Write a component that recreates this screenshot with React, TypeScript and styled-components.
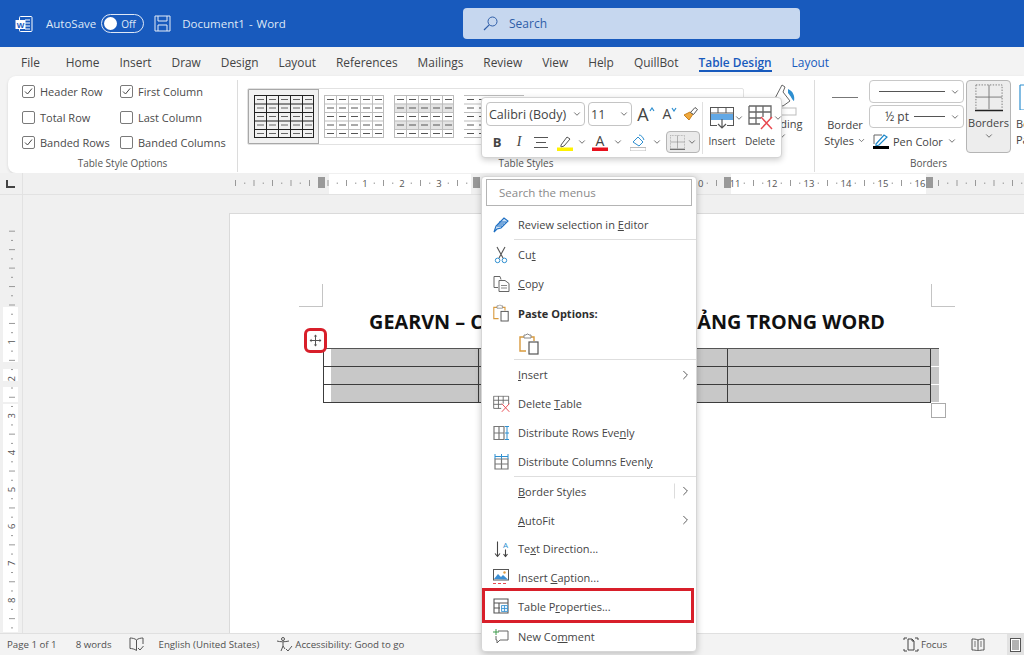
import React from "react";
import styled, { createGlobalStyle } from "styled-components";
import { ChevronDown, ChevronRight } from "lucide-react";

const UI_FONT = `"Open Sans", "Noto Sans", "Liberation Sans", sans-serif`;

const GlobalStyle = createGlobalStyle`
  html, body {
    margin: 0;
    padding: 0;
    background: #f0f0f0;
  }
  * {
    box-sizing: border-box;
  }
`;

const Window = styled.div`
  position: relative;
  width: 1024px;
  height: 655px;
  overflow: hidden;
  display: flex;
  flex-direction: column;
  background: #f3f3f3;
  font-family: ${UI_FONT};
  font-size: 11px;
  color: #404040;
`;

/* title bar */
const TitleBar = styled.header`
  height: 47px;
  flex: none;
  background: #185abd;
  display: flex;
  align-items: center;
  padding-left: 15px;
  color: #dfe8f6;
`;

const AutoSave = styled.span`
  margin-left: 13px;
  font-size: 11.5px;
`;

const Toggle = styled.span`
  margin-left: 5px;
  width: 43px;
  height: 19px;
  border: 1px solid #dfe8f6;
  border-radius: 10px;
  display: flex;
  align-items: center;
  gap: 4px;
  padding-left: 2px;
  font-size: 10px;
`;

const Knob = styled.span`
  width: 13px;
  height: 13px;
  border-radius: 50%;
  background: #fff;
`;

const DocName = styled.span`
  margin-left: 11px;
  font-size: 11.5px;
  word-spacing: 1px;
`;

const SearchBox = styled.div`
  position: absolute;
  left: 463px;
  top: 8px;
  width: 337px;
  height: 31px;
  background: #c6d7ef;
  border-radius: 4px;
  display: flex;
  align-items: center;
  gap: 11px;
  padding-left: 20px;
  color: #2f5ea8;
  font-size: 12px;
`;

/* tabs */
const TabBar = styled.nav`
  height: 29px;
  flex: none;
  display: flex;
  align-items: center;
  gap: 20px;
  padding-left: 21px;
  font-size: 11.9px;
  color: #444;
`;

const Tab = styled.span<{ $active?: boolean; $context?: boolean; $wide?: boolean }>`
  position: relative;
  margin-right: ${(p) => (p.$wide ? 6 : 0)}px;
  color: ${(p) => (p.$context || p.$active ? "#185abd" : "#444")};
  font-weight: ${(p) => (p.$active ? 600 : 400)};

  &::after {
    content: "";
    display: ${(p) => (p.$active ? "block" : "none")};
    position: absolute;
    left: 0;
    right: 0;
    bottom: -2px;
    height: 2px;
    background: #185abd;
  }
`;

/* ribbon */
const Ribbon = styled.section`
  height: 97px;
  flex: none;
  margin-left: 8px;
  background: #fff;
  border-radius: 8px 0 0 8px;
  box-shadow: 0 1px 3px rgba(0, 0, 0, 0.12);
  display: flex;
  overflow: hidden;
`;

const Group = styled.div<{ $width: number }>`
  flex: none;
  width: ${(p) => p.$width}px;
  height: 92px;
  margin-top: 4px;
  border-right: 1px solid #dcdcdc;
  display: flex;
  flex-direction: column;
`;

const GroupBody = styled.div`
  height: 73px;
  flex: none;
  display: flex;
`;

const GroupLabel = styled.div`
  height: 19px;
  flex: none;
  line-height: 21px;
  text-align: center;
  font-size: 10px;
  color: #555;
`;

const OptionGrid = styled.div`
  display: grid;
  grid-template-columns: 98px auto;
  grid-auto-rows: 25.5px;
  align-items: center;
  padding: 0 0 0 14px;
  margin-top: -1px;
`;

const Option = styled.label`
  display: flex;
  align-items: center;
  gap: 5px;
  font-size: 11px;
  color: #4a4a4a;
  white-space: nowrap;
`;

const Check = styled.span`
  width: 13px;
  height: 13px;
  border: 1px solid #7a7a7a;
  border-radius: 2px;
  display: flex;
  align-items: center;
  justify-content: center;
`;

const Gallery = styled.div`
  flex: none;
  margin: 8px 0 0 9px;
  width: 497px;
  height: 57px;
  border: 1px solid #e2e2e2;
  border-radius: 2px;
  display: flex;
  align-items: center;
  gap: 10px;
  overflow: hidden;
`;

const ThumbSlot = styled.div<{ $selected?: boolean }>`
  flex: none;
  width: 71px;
  height: 55px;
  margin-right: -11px;
  display: flex;
  align-items: center;
  justify-content: center;
  border: 1px solid ${(p) => (p.$selected ? "#a8a8a8" : "transparent")};
  background: ${(p) => (p.$selected ? "#f1f1f1" : "transparent")};
`;

const ShadingButton = styled.div`
  flex: none;
  margin-left: 12px;
  width: 52px;
  display: flex;
  flex-direction: column;
  align-items: center;
  font-size: 11px;
  color: #444;
  padding-top: 2px;
`;

const BorderStylesButton = styled.div`
  flex: none;
  width: 54px;
  margin-left: 3px;
  display: flex;
  flex-direction: column;
  align-items: center;
  font-size: 11px;
  line-height: 16px;
  color: #444;
  text-align: center;
`;

const StyleLine = styled.span`
  width: 26px;
  height: 1px;
  background: #777;
  margin: 17px 0 19px;
`;

const SelectColumn = styled.div`
  flex: none;
  width: 95px;
  margin-left: -3px;
  display: flex;
  flex-direction: column;
  gap: 2px;
`;

const LineSelect = styled.div`
  height: 23px;
  flex: none;
  border: 1px solid #c8c8c8;
  border-radius: 4px;
  display: flex;
  align-items: center;
  padding: 0 3px 0 9px;
  gap: 5px;
  font-size: 11px;
  color: #444;
`;

const PtLabel = styled.span`
  margin-left: 6px;
  font-size: 12px;
`;

const PenRow = styled.div`
  display: flex;
  align-items: center;
  gap: 4px;
  margin: 3px 0 0 4px;
  font-size: 11px;
  color: #444;
  white-space: nowrap;
`;

const Rule = styled.span`
  flex: 1;
  height: 1px;
  background: #555;
`;

const BordersButton = styled.div`
  flex: none;
  width: 45px;
  height: 73px;
  margin-left: 2px;
  background: #ededed;
  border: 1px solid #b5b5b5;
  border-radius: 4px;
  display: flex;
  flex-direction: column;
  align-items: center;
  padding-top: 3px;
  font-size: 11px;
  color: #444;
`;

const BordersText = styled.span`
  margin-top: 3px;
  line-height: 16px;
`;

const PainterButton = styled.div`
  flex: none;
  margin-left: 5px;
  display: flex;
  flex-direction: column;
  font-size: 11px;
  line-height: 16px;
  color: #444;
  white-space: nowrap;
`;

/* rulers and page */
const RulerBar = styled.div`
  height: 22px;
  flex: none;
  display: flex;
  background: #f0f0f0;
  border-bottom: 1px solid #e2e2e2;
`;

const RulerCorner = styled.div`
  width: 23px;
  flex: none;
  border-right: 1px solid #e2e2e2;
  display: flex;
  align-items: center;
  justify-content: center;
`;

const WorkArea = styled.main`
  flex: 1;
  min-height: 0;
  display: flex;
  background: #f0f0f0;
`;

const SideRuler = styled.div`
  width: 23px;
  flex: none;
  border-right: 1px solid #e2e2e2;
`;

const Canvas = styled.div`
  flex: 1;
  min-width: 0;
  padding: 18px 0 0 206px;
  display: flex;
`;

const Page = styled.div`
  position: relative;
  flex: 1;
  min-width: 0;
  background: #fff;
  border: 1px solid #dadada;
  border-right: 0;
  border-bottom: 0;
  padding: 92px 93px 0 93px;
`;

const CropMark = styled.span<{ $side: "left" | "right" }>`
  position: absolute;
  top: 70px;
  width: 24px;
  height: 23px;
  border-bottom: 1px solid #c4c4c4;
  ${(p) =>
    p.$side === "left"
      ? "left: 69px; border-right: 1px solid #c4c4c4;"
      : "left: 701px; border-left: 1px solid #c4c4c4;"}
`;

const DocTitle = styled.h1`
  margin: 0;
  height: 42px;
  padding-top: 1px;
  line-height: 30px;
  text-align: center;
  white-space: nowrap;
  font-family: "Open Sans", "Liberation Sans", sans-serif;
  font-size: 19.8px;
  font-weight: 700;
  color: #111;
`;

const DocTable = styled.div`
  width: 616px;
  border-top: 1px solid #555;
`;

const TableRow = styled.div`
  display: grid;
  grid-template-columns: 156px 125px 124px 203px 8px;
  height: 18px;
`;

const TableCell = styled.div<{ $first?: boolean }>`
  background: ${(p) =>
    p.$first ? "linear-gradient(90deg, #fff 7px, #c8c8c8 7px)" : "#c8c8c8"};
  border-bottom: 1px solid #3c3c3c;
  border-right: 1px solid #3c3c3c;
  ${(p) => (p.$first ? "border-left: 1px solid #3c3c3c;" : "")}
`;

const RowEnd = styled.div`
  background: #c8c8c8;
  margin-bottom: 1px;
`;

const MoveHandle = styled.div`
  position: absolute;
  left: 74px;
  top: 114px;
  width: 23px;
  height: 25px;
  border: 3px solid #d81f2a;
  border-radius: 6px;
  background: #fff;
  display: flex;
  align-items: center;
  justify-content: center;
`;

const ResizeHandle = styled.span`
  position: absolute;
  left: 701px;
  top: 189px;
  width: 15px;
  height: 15px;
  border: 1px solid #aaa;
  background: #fff;
`;

/* floating mini toolbar */
const MiniToolbar = styled.div`
  position: absolute;
  left: 481px;
  top: 97px;
  width: 301px;
  height: 61px;
  background: #fff;
  border: 1px solid #d4d4d4;
  border-radius: 4px;
  box-shadow: 0 2px 6px rgba(0, 0, 0, 0.2);
  display: flex;
  padding: 4px 0 0 4px;
`;

const MiniLeft = styled.div`
  width: 216px;
  flex: none;
  display: flex;
  flex-direction: column;
  gap: 5px;
`;

const MiniRow = styled.div`
  display: flex;
  align-items: center;
`;

const FontSelect = styled.div<{ $width: number }>`
  width: ${(p) => p.$width}px;
  height: 24px;
  flex: none;
  margin-right: 3px;
  border: 1px solid #c4c4c4;
  border-radius: 4px;
  display: flex;
  align-items: center;
  justify-content: space-between;
  padding: 0 2px;
  font-size: 12.5px;
  color: #444;
  white-space: nowrap;
`;

const MiniGlyph = styled.span<{ $bold?: boolean; $italic?: boolean; $size?: number }>`
  font-family: ${(p) => (p.$italic ? `"Liberation Serif", serif` : UI_FONT)};
  font-size: ${(p) => p.$size ?? 13}px;
  font-weight: ${(p) => (p.$bold ? 700 : 400)};
  font-style: ${(p) => (p.$italic ? "italic" : "normal")};
  color: #444;
  line-height: 1;
`;

const Slot = styled.span<{ $width: number }>`
  flex: none;
  width: ${(p) => p.$width}px;
  display: flex;
  align-items: center;
  justify-content: center;
`;

const MiniBorders = styled.div`
  width: 34px;
  height: 22px;
  flex: none;
  margin-left: 6px;
  background: #eaeaea;
  border: 1px solid #b5b5b5;
  border-radius: 4px;
  display: flex;
  align-items: center;
  justify-content: center;
  gap: 2px;
`;

const MiniSep = styled.div`
  width: 1px;
  height: 52px;
  flex: none;
  background: #e0e0e0;
`;

const MiniAction = styled.div`
  width: 38px;
  flex: none;
  display: flex;
  flex-direction: column;
  align-items: center;
  font-size: 10px;
  color: #444;
`;

const ActionIcon = styled.div`
  height: 31px;
  display: flex;
  align-items: center;
  margin-bottom: 1px;
`;

const ActionIconRow = styled(MiniRow)`
  padding-left: 10px;
`;

/* context menu */
const ContextMenu = styled.div`
  position: absolute;
  left: 481px;
  top: 176px;
  width: 216px;
  height: 476px;
  background: #fff;
  border: 1px solid #d6d6d6;
  border-radius: 4px;
  box-shadow: 0 2px 7px rgba(0, 0, 0, 0.22);
  padding-top: 2px;
  font-size: 11px;
  color: #454545;
`;

const MenuSearch = styled.div`
  margin: 0 4px 4px 4px;
  height: 27px;
  border: 1px solid #b4b4b4;
  display: flex;
  align-items: center;
  padding-left: 12px;
  font-size: 11.5px;
  color: #8a8a8a;
`;

const MenuItem = styled.div<{ $marked?: boolean }>`
  position: relative;
  height: 29px;
  display: flex;
  align-items: center;
  padding-left: 36px;
  white-space: nowrap;

  &::after {
    content: "";
    display: ${(p) => (p.$marked ? "block" : "none")};
    position: absolute;
    left: 0;
    right: 2px;
    top: -4px;
    bottom: -3px;
    border: 3px solid #d81f2a;
  }
`;

const CompactItem = styled(MenuItem)`
  height: 28.7px;
`;

const LastItem = styled(MenuItem)`
  margin-top: 2px;
`;

const MenuIcon = styled.span`
  position: absolute;
  left: 0;
  top: 50%;
  width: 38px;
  transform: translateY(-50%);
  display: flex;
  justify-content: center;
`;

const MenuChevron = styled.span<{ $split?: boolean }>`
  position: absolute;
  right: 3px;
  top: 50%;
  transform: translateY(-50%);
  display: flex;
  padding-left: 3px;
  border-left: ${(p) => (p.$split ? "1px solid #dcdcdc" : "0")};
`;

const MenuDivider = styled.div`
  height: 1px;
  margin-left: 32px;
  background: #dedede;
`;

const PasteHead = styled(MenuItem)`
  font-weight: 700;
  color: #2e2e2e;
  height: 30px;
`;

const PasteChoice = styled.div`
  height: 31px;
  padding-left: 37px;
  display: flex;
  align-items: center;
`;

/* status bar */
const StatusBar = styled.footer`
  height: 22px;
  flex: none;
  display: flex;
  align-items: center;
  background: #f3f3f3;
  border-top: 1px solid #e0e0e0;
  padding-left: 7px;
  font-size: 9.7px;
  color: #505050;
  white-space: nowrap;
`;

const StatusItem = styled.span<{ $gap: number }>`
  margin-right: ${(p) => p.$gap}px;
  display: flex;
  align-items: center;
  gap: 2px;
`;

const StatusRight = styled.div`
  margin-left: auto;
  height: 100%;
  display: flex;
  align-items: center;
`;

const PrintView = styled.span`
  margin-left: 22px;
  width: 17px;
  height: 100%;
  background: #e2e2e2;
  display: flex;
  align-items: center;
  justify-content: center;
`;

const Icon = styled.svg`
  display: block;
  flex: none;
`;

const Chev = ({ size = 10 }: { size?: number }) => (
  <ChevronDown size={size} strokeWidth={2} color="#555" style={{ flex: "none" }} />
);

const CheckBox = ({ on, label }: { on?: boolean; label: string }) => (
  <Option>
    <Check>
      {on && (
        <Icon width="9" height="9" viewBox="0 0 9 9">
          <path d="M1 4.5 3.5 7 8 1.5" fill="none" stroke="#444" strokeWidth="1" />
        </Icon>
      )}
    </Check>
    {label}
  </Option>
);

const WordLogo = () => (
  <Icon width="18" height="18" viewBox="0 0 18 18">
    <rect x="4.5" y="1.5" width="12.5" height="15" rx="1" fill="none" stroke="#fff" />
    <path d="M10 5h5M10 8h5M10 11h5M10 14h5" stroke="#fff" />
    <rect x="0.5" y="5" width="10" height="9" fill="#fff" />
    <text x="5.5" y="12.6" textAnchor="middle" fontSize="8" fontWeight="700" fill="#185abd" fontFamily="Liberation Sans">
      W
    </text>
  </Icon>
);

const SaveIcon = () => (
  <Icon width="17" height="17" viewBox="0 0 17 17" style={{ marginLeft: 10 }}>
    <path d="M1 1h15v15H1zM4 1v5h9V1M4 16v-6h9v6" fill="none" stroke="#e4ecf8" />
  </Icon>
);

const SearchGlass = () => (
  <Icon width="15" height="15" viewBox="0 0 15 15">
    <circle cx="9.5" cy="5.5" r="4.5" fill="none" stroke="#2f5ea8" />
    <path d="M6.2 8.8 1 14" stroke="#2f5ea8" strokeWidth="1.2" />
  </Icon>
);

type ThumbKind = "dark" | "light" | "banded" | "lines";

const TableThumb = ({ kind }: { kind: ThumbKind }) => {
  const line = kind === "dark" ? "#222" : "#bdbdbd";
  const cols = [0, 1, 2, 3, 4];
  const rows = [0, 1, 2, 3, 4];
  return (
    <Icon width="60" height="43" viewBox="0 0 60 43">
      {kind === "banded" &&
        [1, 3].map((r) => <rect key={r} x="0" y={r * 8.5} width="60" height="8.5" fill="#e4e4e4" />)}
      {rows.map((r) => (
        <path key={r} d={`M0 ${r * 8.5 + 0.5}H60`} stroke={line} />
      ))}
      <path d="M0 42.5H60" stroke={line} />
      {kind !== "lines" &&
        [0, 1, 2, 3, 4, 5].map((c) => (
          <path key={c} d={`M${Math.min(c * 12 + 0.5, 59.5)} 0V43`} stroke={line} />
        ))}
      {rows.map((r) =>
        cols.map((c) => (
          <path
            key={`${r}-${c}`}
            d={`M${c * 12 + 3} ${r * 8.5 + 4.5}h7`}
            stroke={kind === "dark" ? "#666" : "#555"}
          />
        )),
      )}
    </Icon>
  );
};

const ShadingIcon = () => (
  <Icon width="30" height="34" viewBox="0 0 30 34">
    <path d="M5 22 15 3l3 2-2 5 7 9-7 5z" fill="#fff" stroke="#666" />
    <path d="M21 7c5 2 7 7 6 12-2-1-3-5-6-8z" fill="#2e8fd0" />
    <rect x="12" y="26" width="17" height="7" fill="#fff" stroke="#bdbdbd" />
  </Icon>
);

const BordersGlyph = ({ size }: { size: number }) => (
  <Icon width={size} height={size} viewBox="0 0 30 30">
    <path
      d="M1 1H29V27M1 1V27"
      fill="none"
      stroke="#777"
      strokeWidth="1"
      strokeDasharray="1.5 1.5"
    />
    <path d="M0 28.5H30" stroke="#222" strokeWidth="1.6" />
    <path d="M15 1V27M1 14H29" stroke="#777" strokeWidth="1" />
  </Icon>
);

const PenIcon = () => (
  <Icon width="16" height="16" viewBox="0 0 16 16">
    <path d="M3 11 11 2l3 2-8 8-3 1z" fill="#fff" stroke="#1e88c9" strokeWidth="1.2" />
    <path d="M1 2v9M1 2h8" stroke="#666" />
    <rect x="0" y="13" width="16" height="3" fill="#000" />
  </Icon>
);

const PainterIcon = () => (
  <Icon width="24" height="26" viewBox="0 0 24 26" style={{ marginLeft: 3, marginTop: 4, marginBottom: 6 }}>
    <path d="M1 1h23M1 1v25h23" fill="none" stroke="#2e8fd0" strokeWidth="1.2" />
  </Icon>
);

const GrowFont = ({ up }: { up?: boolean }) => (
  <Slot $width={up ? 22 : 26}>
    <MiniGlyph $size={up ? 18 : 14}>A</MiniGlyph>
    <Icon width="6" height="5" viewBox="0 0 6 5" style={{ marginBottom: 9 }}>
      <path d={up ? "M1 4 3 1l2 3" : "M1 1l2 3 2-3"} fill="none" stroke="#2e8fd0" strokeWidth="1.2" />
    </Icon>
  </Slot>
);

const BrushIcon = () => (
  <Icon width="16" height="16" viewBox="0 0 16 16">
    <path d="M1 9 6 14l4-6-3-2z" fill="#f0a93c" stroke="#c9801d" />
    <path d="M7.5 6.5 12 1.5l2.5 2-4 5z" fill="#fff" stroke="#555" />
  </Icon>
);

const ColorBar = ({ kind }: { kind: "mark" | "text" | "fill" }) => (
  <Icon width="16" height="17" viewBox="0 0 16 17">
    {kind === "mark" && <path d="M4 11 10 3l3 2-6 7-3 1z" fill="#fff" stroke="#555" />}
    {kind === "text" && (
      <text x="8" y="12" textAnchor="middle" fontSize="14" fill="#444" fontFamily="Open Sans">
        A
      </text>
    )}
    {kind === "fill" && (
      <path d="M3 8 8 3l5 5-4 4zM9 1c2 0 4 2 5 5" fill="#fff" stroke="#2e8fd0" />
    )}
    <rect
      x="0"
      y="13.5"
      width="16"
      height="3.5"
      fill={kind === "mark" ? "#fff200" : kind === "text" ? "#e8101c" : "#fff"}
      stroke={kind === "fill" ? "#bbb" : "none"}
    />
  </Icon>
);

const AlignIcon = () => (
  <Icon width="14" height="13" viewBox="0 0 14 13">
    <path d="M0 1.5h14M2 6.5h10M0 11.5h14" stroke="#555" strokeWidth="1.2" />
  </Icon>
);

const InsertRowIcon = () => (
  <Icon width="24" height="24" viewBox="0 0 24 24">
    <rect x="0.5" y="1.5" width="23" height="18" fill="#fff" stroke="#555" />
    <path d="M8 1.5V7M16 1.5V7M0.5 7H23.5" stroke="#555" />
    <rect x="1" y="8" width="22" height="6" fill="#62a8e5" />
    <rect x="7" y="14" width="10" height="6" fill="#fff" />
    <path d="M12 13v9M8 18l4 4 4-4" fill="none" stroke="#555" strokeWidth="1.2" />
  </Icon>
);

const DeleteTableIcon = ({ size = 25 }: { size?: number }) => (
  <Icon width={size} height={size} viewBox="0 0 25 25">
    <path d="M1 1h22v12M1 1v18h11M8 1v18M15 1v11M1 7h22M1 13h12" fill="none" stroke="#666" strokeWidth="1.3" />
    <path d="M13 12 24 24M24 12 13 24" stroke="#e8484f" strokeWidth="1.4" />
  </Icon>
);

const EditorIcon = () => (
  <Icon width="16" height="16" viewBox="0 0 16 16">
    <path d="M1 15 3 9 11 1l4 3-7 7-4 1z" fill="#cfe2f6" stroke="#1e6fc2" strokeWidth="1.1" />
    <path d="M6 5h7M5 7h6M4 9h5" fill="none" stroke="#1e6fc2" strokeWidth="1.1" />
  </Icon>
);

const ScissorsIcon = () => (
  <Icon width="14" height="18" viewBox="0 0 14 18">
    <path d="M3 1 9 12M11 1 5 12" stroke="#555" strokeWidth="1.1" />
    <circle cx="3.6" cy="14.4" r="2.3" fill="none" stroke="#2e8fd0" />
    <circle cx="10.4" cy="14.4" r="2.3" fill="none" stroke="#2e8fd0" />
  </Icon>
);

const CopyIcon = () => (
  <Icon width="17" height="17" viewBox="0 0 17 17">
    <path d="M5 12H1V1h6l1 3" fill="none" stroke="#666" />
    <path d="M6 5h6l4 3v8H6z" fill="#fff" stroke="#666" />
    <path d="M8 10h6M8 12.5h6" stroke="#888" />
  </Icon>
);

const ClipboardIcon = ({ size }: { size: number }) => (
  <Icon width={size} height={size * 1.1} viewBox="0 0 20 22">
    <path d="M7 18H1V4h14v4" fill="none" stroke="#d99a3d" strokeWidth="1.4" />
    <path d="M5 4V2h2l1-1h1l1 1h2v3H5z" fill="#fff" stroke="#888" />
    <rect x="10" y="9" width="9" height="12" fill="#fff" stroke="#555" strokeWidth="1.2" />
  </Icon>
);

const DistributeRowsIcon = () => (
  <Icon width="16" height="15" viewBox="0 0 16 15">
    <path d="M1 1h10v13H1zM6 1v13M1 7.5h10" fill="none" stroke="#777" strokeWidth="1.2" />
    <path d="M14 1v13M12 1h4M12 14h4M12 7.5h4" stroke="#2e8fd0" />
  </Icon>
);

const DistributeColsIcon = () => (
  <Icon width="15" height="16" viewBox="0 0 15 16">
    <path d="M1 5h13v10H1zM7.5 5v10M1 10h13" fill="none" stroke="#777" strokeWidth="1.2" />
    <path d="M1 2.5h13M1 0v5M7.5 0v5M14 0v5" stroke="#2e8fd0" />
  </Icon>
);

const TextDirectionIcon = () => (
  <Icon width="15" height="17" viewBox="0 0 15 17">
    <path d="M3.5 1v15M1 13l2.5 3L6 13M11.5 9v7M9.5 13.5l2 2.5 2-2.5" fill="none" stroke="#444" strokeWidth="1.1" />
    <text x="11.5" y="7" textAnchor="middle" fontSize="8" fill="#2e8fd0" fontFamily="Open Sans">
      A
    </text>
  </Icon>
);

const CaptionIcon = () => (
  <Icon width="16" height="16" viewBox="0 0 16 16">
    <rect x="0.5" y="0.5" width="15" height="10.5" fill="#fff" stroke="#555" />
    <path d="M1 10 5 5l3 3 2-2 5 4.5z" fill="#3b8fd4" />
    <circle cx="11.5" cy="3.5" r="1.2" fill="#e09b3d" />
    <path d="M0 14.5h3M5 14.5h3M10 14.5h3" stroke="#e8484f" />
  </Icon>
);

const TablePropsIcon = () => (
  <Icon width="16" height="16" viewBox="0 0 16 16">
    <path d="M1 1h14v14H1zM1 5h14M1 10h6M6 5v10" fill="none" stroke="#555" strokeWidth="1.1" />
    <path d="M8.5 7.5h6v6h-6zM11.5 7.5v6M8.5 10.5h6" fill="#e6f1fb" stroke="#2e8fd0" strokeWidth="0.8" />
  </Icon>
);

const CommentIcon = () => (
  <Icon width="16" height="16" viewBox="0 0 16 16">
    <path d="M5 2h10v9H7l-3 3v-3H3V7" fill="none" stroke="#666" />
    <path d="M3 0v6M0 3h6" stroke="#3c9a4a" />
  </Icon>
);

const MoveGlyph = () => (
  <Icon width="13" height="13" viewBox="0 0 13 13">
    <path d="M6.5 1v11M1 6.5h11" stroke="#555" />
    <path d="M4.8 2.5 6.5.6l1.7 1.9zM4.8 10.5l1.7 1.9 1.7-1.9zM2.5 4.8.6 6.5l1.9 1.7zM10.5 4.8l1.9 1.7-1.9 1.7z" fill="#555" />
  </Icon>
);

const RulerCornerGlyph = () => (
  <Icon width="9" height="8" viewBox="0 0 9 8" style={{ marginRight: 1 }}>
    <path d="M1 0v7h8" fill="none" stroke="#444" strokeWidth="2" />
  </Icon>
);

const TopRuler = () => {
  const origin = 305;
  const unit = 37;
  const marks: React.ReactNode[] = [];
  for (let i = -10; i <= 76; i++) {
    const x = origin + (i * unit) / 4;
    const inUnits = i / 4;
    const key = `m${i}`;
    if (i % 4 === 0 && i > 0 && inUnits <= 16) {
      marks.push(
        <text key={key} x={x} y="14" textAnchor="middle" fontSize="9.5" fill="#555" fontFamily="Open Sans">
          {inUnits}
        </text>,
      );
    } else if (i % 2 === 0) {
      marks.push(<path key={key} d={`M${x} 7v6`} stroke="#999" />);
    } else {
      marks.push(<path key={key} d={`M${x} 9.5v1.5`} stroke="#999" />);
    }
  }
  return (
    <Icon width="1001" height="21" viewBox="0 0 1001 21">
      <rect x="306" y="1" width="142" height="20" fill="#fff" />
      <rect x="708" y="1" width="195" height="20" fill="#fff" />
      {marks}
      <rect x="295" y="4" width="7" height="11" fill="#999" />
      <rect x="450" y="4" width="7" height="11" fill="#999" />
      <rect x="701" y="4" width="7" height="11" fill="#999" />
      <rect x="903" y="4" width="7" height="11" fill="#999" />
    </Icon>
  );
};

const LeftRuler = () => {
  const origin = 110;
  const unit = 36.9;
  const marks: React.ReactNode[] = [];
  for (let i = -8; i <= 36; i++) {
    const y = origin + (i * unit) / 4;
    if (y > 436) continue;
    const key = `v${i}`;
    if (i % 4 === 0 && i > 0) {
      marks.push(
        <text
          key={key}
          x="11.5"
          y={y}
          transform={`rotate(-90 11.5 ${y})`}
          textAnchor="middle"
          dominantBaseline="central"
          fontSize="9.5"
          fill="#555"
          fontFamily="Open Sans"
        >
          {i / 4}
        </text>,
      );
    } else if (i % 2 === 0) {
      marks.push(<path key={key} d={`M9 ${y}h6`} stroke="#999" />);
    } else {
      marks.push(<path key={key} d={`M11 ${y}h2`} stroke="#999" />);
    }
  }
  return (
    <Icon width="22" height="437" viewBox="0 0 22 437">
      <rect x="3" y="112" width="15" height="55" fill="#fff" />
      <rect x="3" y="174" width="15" height="12" fill="#fff" />
      <rect x="3" y="192" width="15" height="15" fill="#fff" />
      <rect x="3" y="209" width="15" height="228" fill="#fff" />
      {marks}
    </Icon>
  );
};

const BookIcon = () => (
  <Icon width="15" height="15" viewBox="0 0 15 15">
    <path d="M7.5 3C6 1.5 3 1 1 1v10.5c2 0 4.5.5 6.5 2V3zM7.5 3C9 1.5 12 1 14 1v6" fill="none" stroke="#555" />
    <path d="M9 11l2 2 3.5-4" fill="none" stroke="#555" />
  </Icon>
);

const AccessIcon = () => (
  <Icon width="16" height="16" viewBox="0 0 16 16">
    <circle cx="6" cy="2" r="1.5" fill="none" stroke="#555" />
    <path d="M0 4c3 1 8 1 12 0M6 5v4l-2 5M6 9l2 3" fill="none" stroke="#555" />
    <path d="M9 12l2 2 4-5" fill="none" stroke="#555" />
  </Icon>
);

const FocusIcon = () => (
  <Icon width="16" height="15" viewBox="0 0 16 15">
    <path d="M1 3V1h3M12 1h3v2M1 12v2h3M12 14h3v-2" fill="none" stroke="#444" />
    <path d="M5 2h4l2 2v9H5zM9 2v2h2" fill="none" stroke="#444" />
  </Icon>
);

const ReadIcon = () => (
  <Icon width="14" height="13" viewBox="0 0 14 13">
    <path d="M7 2C5 1 3 1 1 1v11c2 0 4 0 6 1 2-1 4-1 6-1V1c-2 0-4 0-6 1zM7 2v11" fill="none" stroke="#555" />
    <path d="M3 4h2M3 6h2M3 8h2M9 4h2M9 6h2M9 8h2" stroke="#777" />
  </Icon>
);

const PrintIcon = () => (
  <Icon width="11" height="14" viewBox="0 0 11 14">
    <rect x="0.5" y="0.5" width="10" height="13" fill="#fff" stroke="#555" />
    <path d="M2 3h7M2 5h7M2 7h7M2 9h7M2 11h7" stroke="#666" />
  </Icon>
);

const ROWS = [0, 1, 2];

export default function App() {
  return (
    <>
      <GlobalStyle />
      <Window>
        <TitleBar>
          <WordLogo />
          <AutoSave>AutoSave</AutoSave>
          <Toggle>
            <Knob />
            Off
          </Toggle>
          <SaveIcon />
          <DocName>Document1 - Word</DocName>
          <SearchBox>
            <SearchGlass />
            Search
          </SearchBox>
        </TitleBar>

        <TabBar>
          <Tab $wide>File</Tab>
          <Tab>Home</Tab>
          <Tab>Insert</Tab>
          <Tab>Draw</Tab>
          <Tab>Design</Tab>
          <Tab>Layout</Tab>
          <Tab>References</Tab>
          <Tab>Mailings</Tab>
          <Tab>Review</Tab>
          <Tab>View</Tab>
          <Tab>Help</Tab>
          <Tab>QuillBot</Tab>
          <Tab $active>Table Design</Tab>
          <Tab $context>Layout</Tab>
        </TabBar>

        <Ribbon>
          <Group $width={230}>
            <GroupBody>
              <OptionGrid>
                <CheckBox on label="Header Row" />
                <CheckBox on label="First Column" />
                <CheckBox label="Total Row" />
                <CheckBox label="Last Column" />
                <CheckBox on label="Banded Rows" />
                <CheckBox label="Banded Columns" />
              </OptionGrid>
            </GroupBody>
            <GroupLabel>Table Style Options</GroupLabel>
          </Group>

          <Group $width={577}>
            <GroupBody>
              <Gallery>
                <ThumbSlot $selected>
                  <TableThumb kind="dark" />
                </ThumbSlot>
                <ThumbSlot>
                  <TableThumb kind="light" />
                </ThumbSlot>
                <ThumbSlot>
                  <TableThumb kind="banded" />
                </ThumbSlot>
                <ThumbSlot>
                  <TableThumb kind="lines" />
                </ThumbSlot>
              </Gallery>
              <ShadingButton>
                <ShadingIcon />
                Shading
                <Chev />
              </ShadingButton>
            </GroupBody>
            <GroupLabel>Table Styles</GroupLabel>
          </Group>

          <Group $width={228}>
            <GroupBody>
              <BorderStylesButton>
                <StyleLine />
                Border
                <span>
                  Styles <Chev size={9} />
                </span>
              </BorderStylesButton>
              <SelectColumn>
                <LineSelect>
                  <Rule />
                  <Chev />
                </LineSelect>
                <LineSelect>
                  <PtLabel>½ pt</PtLabel>
                  <Rule />
                  <Chev />
                </LineSelect>
                <PenRow>
                  <PenIcon />
                  Pen Color
                  <Chev />
                </PenRow>
              </SelectColumn>
              <BordersButton>
                <BordersGlyph size={28} />
                <BordersText>Borders</BordersText>
                <Chev />
              </BordersButton>
              <PainterButton>
                <PainterIcon />
                <span>Border</span>
                <span>Painter</span>
              </PainterButton>
            </GroupBody>
            <GroupLabel>Borders</GroupLabel>
          </Group>
        </Ribbon>

        <RulerBar>
          <RulerCorner>
            <RulerCornerGlyph />
          </RulerCorner>
          <TopRuler />
        </RulerBar>

        <WorkArea>
          <SideRuler>
            <LeftRuler />
          </SideRuler>
          <Canvas>
            <Page>
              <CropMark $side="left" />
              <CropMark $side="right" />
              <DocTitle>GEARVN – CÁCH CĂN CHỈNH LẠI BẢNG TRONG WORD</DocTitle>
              <MoveHandle>
                <MoveGlyph />
              </MoveHandle>
              <DocTable>
                {ROWS.map((r) => (
                  <TableRow key={r}>
                    <TableCell $first />
                    <TableCell />
                    <TableCell />
                    <TableCell />
                    <RowEnd />
                  </TableRow>
                ))}
              </DocTable>
              <ResizeHandle />
            </Page>
          </Canvas>
        </WorkArea>

        <StatusBar>
          <StatusItem $gap={19}>Page 1 of 1</StatusItem>
          <StatusItem $gap={17}>8 words</StatusItem>
          <StatusItem $gap={15}>
            <BookIcon />
          </StatusItem>
          <StatusItem $gap={18}>English (United States)</StatusItem>
          <StatusItem $gap={0}>
            <AccessIcon />
            Accessibility: Good to go
          </StatusItem>
          <StatusRight>
            <StatusItem $gap={24}>
              <FocusIcon />
              Focus
            </StatusItem>
            <ReadIcon />
            <PrintView>
              <PrintIcon />
            </PrintView>
          </StatusRight>
        </StatusBar>

        <MiniToolbar>
          <MiniLeft>
            <MiniRow>
              <FontSelect $width={99}>
                Calibri (Body)
                <Chev />
              </FontSelect>
              <FontSelect $width={44}>
                11
                <Chev />
              </FontSelect>
              <GrowFont up />
              <GrowFont />
              <Slot $width={16}>
                <BrushIcon />
              </Slot>
            </MiniRow>
            <MiniRow>
              <Slot $width={22}>
                <MiniGlyph $bold>B</MiniGlyph>
              </Slot>
              <Slot $width={22}>
                <MiniGlyph $italic $size={14}>
                  I
                </MiniGlyph>
              </Slot>
              <Slot $width={22}>
                <AlignIcon />
              </Slot>
              <Slot $width={26}>
                <ColorBar kind="mark" />
              </Slot>
              <Slot $width={8}>
                <Chev />
              </Slot>
              <Slot $width={28}>
                <ColorBar kind="text" />
              </Slot>
              <Slot $width={8}>
                <Chev />
              </Slot>
              <Slot $width={32}>
                <ColorBar kind="fill" />
              </Slot>
              <Slot $width={6}>
                <Chev />
              </Slot>
              <MiniBorders>
                <BordersGlyph size={15} />
                <Chev />
              </MiniBorders>
            </MiniRow>
          </MiniLeft>
          <MiniSep />
          <MiniAction>
            <ActionIcon>
              <ActionIconRow>
                <InsertRowIcon />
                <Chev />
              </ActionIconRow>
            </ActionIcon>
            Insert
          </MiniAction>
          <MiniAction>
            <ActionIcon>
              <ActionIconRow>
                <DeleteTableIcon />
                <Chev />
              </ActionIconRow>
            </ActionIcon>
            Delete
          </MiniAction>
        </MiniToolbar>

        <ContextMenu>
          <MenuSearch>Search the menus</MenuSearch>
          <MenuItem>
            <MenuIcon>
              <EditorIcon />
            </MenuIcon>
            <span>
              Review selection in <u>E</u>ditor
            </span>
          </MenuItem>
          <MenuDivider />
          <MenuItem>
            <MenuIcon>
              <ScissorsIcon />
            </MenuIcon>
            <span>
              Cu<u>t</u>
            </span>
          </MenuItem>
          <MenuItem>
            <MenuIcon>
              <CopyIcon />
            </MenuIcon>
            <span>
              <u>C</u>opy
            </span>
          </MenuItem>
          <PasteHead>
            <MenuIcon>
              <ClipboardIcon size={16} />
            </MenuIcon>
            Paste Options:
          </PasteHead>
          <PasteChoice>
            <ClipboardIcon size={20} />
          </PasteChoice>
          <MenuDivider />
          <MenuItem>
            <span>
              <u>I</u>nsert
            </span>
            <MenuChevron>
              <ChevronRight size={15} strokeWidth={1.4} />
            </MenuChevron>
          </MenuItem>
          <MenuItem>
            <MenuIcon>
              <DeleteTableIcon size={17} />
            </MenuIcon>
            <span>
              Delete <u>T</u>able
            </span>
          </MenuItem>
          <MenuItem>
            <MenuIcon>
              <DistributeRowsIcon />
            </MenuIcon>
            <span>
              Distribute Rows Eve<u>n</u>ly
            </span>
          </MenuItem>
          <MenuItem>
            <MenuIcon>
              <DistributeColsIcon />
            </MenuIcon>
            <span>
              Distribute Columns Evenl<u>y</u>
            </span>
          </MenuItem>
          <MenuDivider />
          <CompactItem>
            <span>
              <u>B</u>order Styles
            </span>
            <MenuChevron $split>
              <ChevronRight size={15} strokeWidth={1.4} />
            </MenuChevron>
          </CompactItem>
          <CompactItem>
            <span>
              <u>A</u>utoFit
            </span>
            <MenuChevron>
              <ChevronRight size={15} strokeWidth={1.4} />
            </MenuChevron>
          </CompactItem>
          <CompactItem>
            <MenuIcon>
              <TextDirectionIcon />
            </MenuIcon>
            <span>
              Te<u>x</u>t Direction...
            </span>
          </CompactItem>
          <CompactItem>
            <MenuIcon>
              <CaptionIcon />
            </MenuIcon>
            <span>
              Insert <u>C</u>aption...
            </span>
          </CompactItem>
          <CompactItem $marked>
            <MenuIcon>
              <TablePropsIcon />
            </MenuIcon>
            <span>
              Table P<u>r</u>operties...
            </span>
          </CompactItem>
          <LastItem>
            <MenuIcon>
              <CommentIcon />
            </MenuIcon>
            <span>
              New Co<u>m</u>ment
            </span>
          </LastItem>
        </ContextMenu>
      </Window>
    </>
  );
}
